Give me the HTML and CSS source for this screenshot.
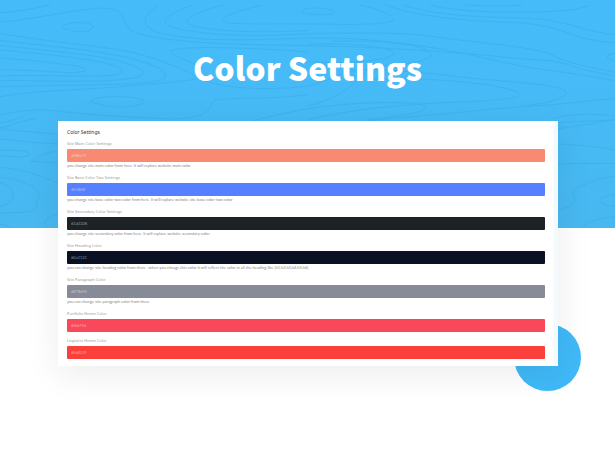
FILE: index.html
```html
<!DOCTYPE html>
<html lang="en">
<head>
    <meta charset="UTF-8">
    <meta name="viewport" content="width=device-width, initial-scale=1.0">
    <title>Color Settings</title>
    <link rel="stylesheet" href="styles.css">
</head>
<body>
<header class="hero">
    <!-- wood grain lines -->
    <svg class="hero-grain" viewBox="0 0 1845 684" preserveAspectRatio="xMidYMin slice" aria-hidden="true">
        <path d="M0 38C60 34 100 26 150 15M0 66C120 56 230 26 310 24C400 26 350 84 420 102C520 130 720 134 924 137C1090 140 1280 150 1470 167C1600 184 1650 172 1720 200C1780 218 1810 220 1845 228"/>
        <path d="M474 15C410 60 430 90 500 104C620 126 760 120 924 114C1060 112 1180 124 1290 142C1400 156 1490 188 1600 204C1700 218 1790 232 1845 242"/>
        <path d="M578 15C470 54 480 78 550 90C680 112 800 108 924 101C1050 98 1190 96 1290 108C1430 130 1560 134 1650 162C1700 190 1790 206 1845 216"/>
        <path d="M670 15C540 50 530 74 620 86C720 98 840 96 924 92M783 15C680 44 650 56 680 68C760 76 860 70 924 72C1020 72 1130 78 1180 62C1190 46 1130 26 1080 15"/>
        <path d="M904 32C916 22 960 22 990 28C1010 34 1010 42 980 44C940 44 904 42 904 32M188 79C196 66 270 62 279 78C282 96 240 98 214 92C196 88 188 86 188 79"/>
        <path d="M1156 15C1240 46 1360 60 1500 66C1630 68 1680 90 1740 112C1780 122 1810 126 1845 128M1210 15C1290 44 1440 52 1560 54C1700 56 1740 94 1845 104M1290 15C1360 34 1500 38 1600 36C1700 34 1740 28 1770 15M1395 15C1440 18 1510 18 1565 16"/>
        <path d="M0 100C160 128 300 136 400 158C500 184 560 212 600 236C680 272 830 270 924 258C1010 240 1010 210 1110 208C1230 212 1340 226 1450 238C1600 250 1700 258 1698 280C1690 304 1600 318 1450 330C1300 346 1200 352 1100 362"/>
        <path d="M0 121C140 138 270 148 380 172C480 196 510 220 490 236C460 258 260 252 0 260M0 136C150 154 250 160 340 178C430 202 450 222 410 232C310 252 160 240 0 242"/>
        <path d="M0 150C130 162 210 170 290 184C360 198 380 210 355 222C300 236 120 222 0 228M0 174C100 180 170 190 230 198C270 208 270 216 210 218C120 214 60 208 0 210"/>
        <path d="M924 156C790 144 540 136 514 152C512 166 560 180 610 206M924 132C1060 128 1180 142 1182 160C1170 184 1040 190 924 186M1000 124C1180 120 1290 136 1294 166C1280 190 1170 196 1120 200C1060 232 1070 282 920 318"/>
        <path d="M1110 238C1300 230 1540 254 1560 284C1550 306 1340 304 1240 314C1080 324 990 346 924 358M270 303C290 286 400 284 433 302C432 320 360 326 310 316C290 310 274 308 270 303"/>
        <path d="M0 290C120 268 260 272 400 256C500 250 580 240 620 230M0 346C60 330 120 324 200 336C320 350 430 352 520 357C650 352 620 318 642 302C680 290 810 300 924 284M760 362C850 340 920 324 990 318C1060 308 1260 300 1276 320C1280 340 1180 350 1100 360"/>
        <path d="M1845 160C1810 166 1818 176 1845 182M1510 390C1600 370 1700 366 1845 360M1480 410C1620 394 1720 382 1845 358M1660 355C1720 340 1780 340 1845 348M1580 320C1700 312 1780 300 1845 296"/>
        <path d="M0 370C20 368 50 354 70 350M200 444C250 448 270 470 268 484C260 496 200 490 93 484M200 456C130 446 92 486 93 490M0 386C60 394 120 398 200 404"/>
        <path d="M0 417C70 424 120 430 200 432M0 384C30 380 60 360 110 356M0 712"/>
        <path d="M0 452C40 448 84 452 90 462C86 474 40 472 0 466"/>
        <path d="M0 502C80 510 130 530 200 560M0 532C80 542 120 566 118 590C102 610 120 628 92 634C60 640 30 636 0 640M0 548C30 554 40 572 40 588C36 604 20 614 0 620M0 672C16 674 26 680 36 684M200 642C150 640 124 660 140 684"/>
        <path d="M1670 376C1690 378 1700 386 1670 392M1670 432C1730 434 1790 440 1845 450M1670 492C1720 490 1790 490 1845 490M1670 632C1790 600 1660 580 1760 552C1790 536 1820 532 1845 528M1845 584C1790 590 1780 612 1845 620M1744 684C1770 660 1800 656 1845 650"/>
    </svg>
    <h1>Color Settings</h1>
</header>

<main class="panel-wrap">
    <div class="dot"></div>
    <form class="panel">
        <h2>Color Settings</h2>
        <div class="field">
            <label for="main-color">Site Main Color Settings</label>
            <input class="coral" type="text" id="main-color" value="#f88a73">
            <p class="help">you change site main color from here. It will replace website main color</p>
        </div>
        <div class="field">
            <label for="base-color">Site Base Color Two Settings</label>
            <input class="blue" type="text" id="base-color" value="#5580ff">
            <p class="help">you change site base color two color from here. It will replace website site base color two color</p>
        </div>
        <div class="field">
            <label for="secondary-color">Site Secondary Color Settings</label>
            <input class="black" type="text" id="secondary-color" value="#1d2228">
            <p class="help">you change site secondary color from here. It will replace website secondary color</p>
        </div>
        <div class="field">
            <label for="heading-color">Site Heading Color</label>
            <input class="navy" type="text" id="heading-color" value="#0a1121">
            <p class="help">you can change site heading color from there , when you chnage this color it will reflect the color in all the heading like (h1,h2,h3,h4,h5,h6)</p>
        </div>
        <div class="field">
            <label for="paragraph-color">Site Paragraph Color</label>
            <input class="grey" type="text" id="paragraph-color" value="#878a95">
            <p class="help">you can change site paragraph color from there</p>
        </div>
        <div class="field">
            <label for="portfolio-color">Portfolio Home Color</label>
            <input class="pink" type="text" id="portfolio-color" value="#fb4756">
        </div>
        <div class="field">
            <label for="logistics-color">Logistics Home Color</label>
            <input class="red" type="text" id="logistics-color" value="#fb4039">
        </div>
    </form>
</main>
</body>
</html>
```
FILE: styles.css
```css
* {
    box-sizing: border-box;
}
body {
    margin: 0;
    background-color: #fff;
    font-family: Lato, "Liberation Sans", sans-serif;
}
.hero {
    position: relative;
    height: 228px;
    padding-top: 42px;
    background: linear-gradient(#45bcfa, #48b8f0);
    overflow: hidden;
    text-align: center;
}
.hero-grain {
    position: absolute;
    top: 0;
    left: 0;
    width: 100%;
    height: 100%;
    fill: none;
    stroke: #3aaeea;
    stroke-width: 3;
    opacity: 0.6;
}
.hero h1 {
    position: relative;
    margin: 0;
    color: #fff;
    font-family: "Noto Sans CJK SC", "Open Sans", sans-serif;
    font-size: 32px;
    font-weight: 900;
    line-height: 50px;
}
.panel-wrap {
    position: relative;
    margin: -107px 57px 40px 58px;
}
.panel {
    position: relative;
    padding: 8px 13px 2px 9px;
    background: linear-gradient(to left, #f3fafd 4px, #fff 5px);
    box-shadow: 0 8px 32px rgba(0, 0, 0, 0.08);
}
.panel h2 {
    margin: 0 0 5px;
    color: #333;
    font-family: "Noto Sans", sans-serif;
    font-size: 5px;
    font-weight: 400;
    line-height: 6px;
}
.dot {
    position: absolute;
    right: -23px;
    bottom: -25px;
    width: 67px;
    height: 67px;
    border-radius: 50%;
    background-color: #40b9f8;
}
.field {
    margin-bottom: 5px;
}
.field label {
    display: block;
    margin-bottom: 1px;
    color: #999;
    font-family: "Noto Sans", sans-serif;
    font-size: 4px;
    line-height: 8px;
}
.field input {
    display: block;
    width: 100%;
    height: 13px;
    padding: 0 4px;
    border: 0;
    border-radius: 1px;
    outline: 0;
    color: rgba(255, 255, 255, 0.5);
    font-family: inherit;
    font-size: 4px;
}
.help {
    margin: 0;
    padding-top: 1px;
    color: #888;
    font-size: 4px;
    line-height: 6px;
}
.coral {
    background-color: #f88a73;
}
.blue {
    background-color: #5580ff;
}
.black {
    background-color: #1d2226;
}
.navy {
    background-color: #0a1123;
}
.grey {
    background-color: #878a97;
}
.pink {
    background-color: #f94859;
}
.red {
    background-color: #fb403b;
}
```
